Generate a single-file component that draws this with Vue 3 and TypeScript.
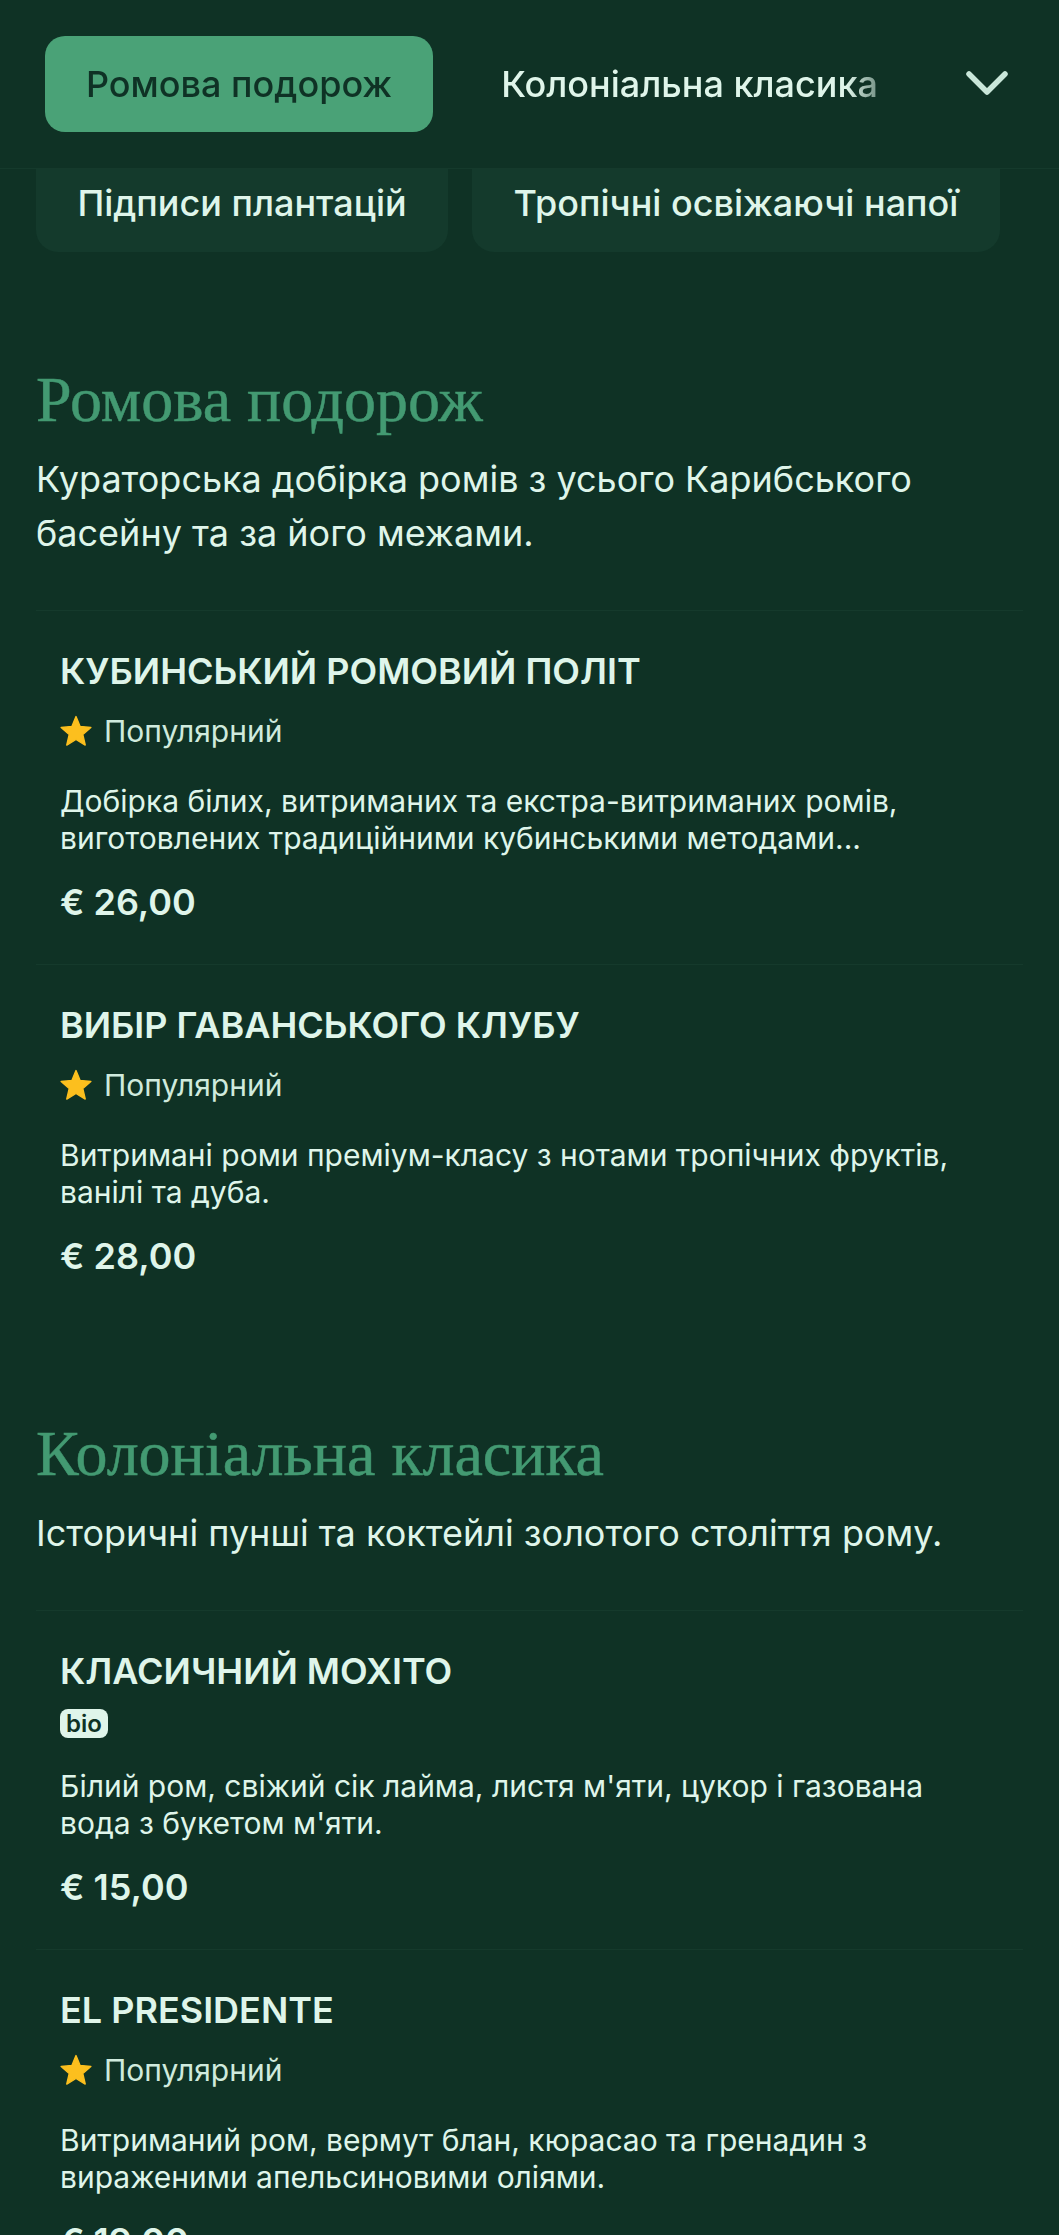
<script setup lang="ts">
interface Item { name: string; tag: 'pop' | 'bio'; desc: string; price: string }
interface Section { title: string; desc: string; items: Item[] }
const sections: Section[] = [
  {
    title: 'Ромова подорож',
    desc: 'Кураторська добірка ромів з усього Карибського басейну та за його межами.',
    items: [
      { name: 'КУБИНСЬКИЙ РОМОВИЙ ПОЛІТ', tag: 'pop', desc: 'Добірка білих, витриманих та екстра-витриманих ромів, виготовлених традиційними кубинськими методами...', price: '€ 26,00' },
      { name: 'ВИБІР ГАВАНСЬКОГО КЛУБУ', tag: 'pop', desc: 'Витримані роми преміум-класу з нотами тропічних фруктів, ванілі та дуба.', price: '€ 28,00' },
    ],
  },
  {
    title: 'Колоніальна класика',
    desc: 'Історичні пунші та коктейлі золотого століття рому.',
    items: [
      { name: 'КЛАСИЧНИЙ МОХІТО', tag: 'bio', desc: "Білий ром, свіжий сік лайма, листя м'яти, цукор і газована вода з букетом м'яти.", price: '€ 15,00' },
      { name: 'EL PRESIDENTE', tag: 'pop', desc: 'Витриманий ром, вермут блан, кюрасао та гренадин з вираженими апельсиновими оліями.', price: '€ 19,00' },
    ],
  },
]
</script>

<template>
  <div class="page">
    <header class="head">
      <div class="tabs">
        <span class="tab active">Ромова подорож</span>
        <span class="tab">Колоніальна класика</span>
      </div>
      <svg class="chev" viewBox="0 0 44 28" width="44" height="28" fill="none">
        <path d="M4 4 L22 22 L40 4" stroke="#c9e6d9" stroke-width="5.5" stroke-linecap="round" stroke-linejoin="round" />
      </svg>
    </header>
    <div class="chips">
      <span class="chip chip-a">Підписи плантацій</span>
      <span class="chip chip-b">Тропічні освіжаючі напої</span>
    </div>
    <section v-for="s in sections" :key="s.title" class="section">
      <h2 class="title">{{ s.title }}</h2>
      <p class="lead">{{ s.desc }}</p>
      <article v-for="it in s.items" :key="it.name" class="item">
        <h3 class="name">{{ it.name }}</h3>
        <div v-if="it.tag === 'pop'" class="tag">
          <svg class="star" viewBox="0 0 24 24" width="34" height="34"><path d="M12 1.8l2.9 7 7.6.7-5.7 5 1.7 7.4L12 18l-6.5 3.9 1.7-7.4-5.7-5 7.6-.7z" fill="#fcbf1e" stroke="#fcbf1e" stroke-width="1" stroke-linejoin="round" /></svg>
          <span>Популярний</span>
        </div>
        <div v-else class="tag tag-bio"><span class="bio">bio</span></div>
        <p class="desc">{{ it.desc }}</p>
        <div class="price">{{ it.price }}</div>
      </article>
    </section>
  </div>
</template>

<style>
html, body { margin: 0; background: #0f3225; }
</style>

<style scoped>
.page {
  width: 1059px;
  height: 2235px;
  overflow: hidden;
  background: #0f3225;
  color: #dff5ea;
  font-family: Inter, "Noto Sans", sans-serif;
}
.head {
  height: 169px;
  box-sizing: border-box;
  padding: 36px 50px 0 45px;
  display: flex;
  align-items: flex-start;
  justify-content: space-between;
  border-bottom: 1px solid #153a2c;
}
.tabs {
  display: flex;
  width: 862px;
  gap: 27px;
  overflow: hidden;
  white-space: nowrap;
  -webkit-mask-image: linear-gradient(to right, #000 802px, transparent 862px);
  mask-image: linear-gradient(to right, #000 802px, transparent 862px);
}
.tab {
  height: 96px;
  line-height: 96px;
  padding: 0 41px;
  font-size: 36px;
  font-weight: 500;
  border-radius: 20px;
  flex: none;
}
.active { background: #4aa277; color: #0f3225; }
.chev { margin-top: 34px; }
.chips {
  display: flex;
  gap: 24px;
  padding: 0 36px;
  height: 83px;
  margin-bottom: 12px;
}
.chip {
  background: #143a2c;
  border-radius: 0 0 22px 22px;
  font-size: 36px;
  font-weight: 500;
  line-height: 68px;
  text-align: center;
  box-sizing: border-box;
}
.chip-a { width: 412px; }
.chip-b { width: 528px; }
.section { padding: 96px 36px 0; }
.title {
  margin: 0;
  font-family: "Liberation Serif", serif;
  font-size: 64px;
  font-weight: 400;
  line-height: 80px;
  color: #439a72;
  -webkit-text-stroke: 0.5px #439a72;
}
.lead { margin: 12px 0 0; padding-bottom: 50px; font-size: 36px; line-height: 54px; }
.item { padding: 38px 24px 40px; border-top: 1px solid #153a2c; }
.name { margin: 0; font-size: 36px; font-weight: 600; line-height: 44px; }
.tag { display: flex; align-items: center; gap: 11px; height: 44px; margin-top: 16px; font-size: 30px; color: #cfeadd; }
.star { margin-left: -1px; }
.tag-bio { height: 29px; }
.bio { background: #dff5ea; color: #0f3225; font-size: 24px; font-weight: 600; padding: 0 6px; border-radius: 8px; line-height: 29px; }
.desc { margin: 30px 0 0; font-size: 30px; line-height: 36.5px; }
.price { margin-top: 24px; font-size: 36px; font-weight: 600; line-height: 44px; }
</style>
